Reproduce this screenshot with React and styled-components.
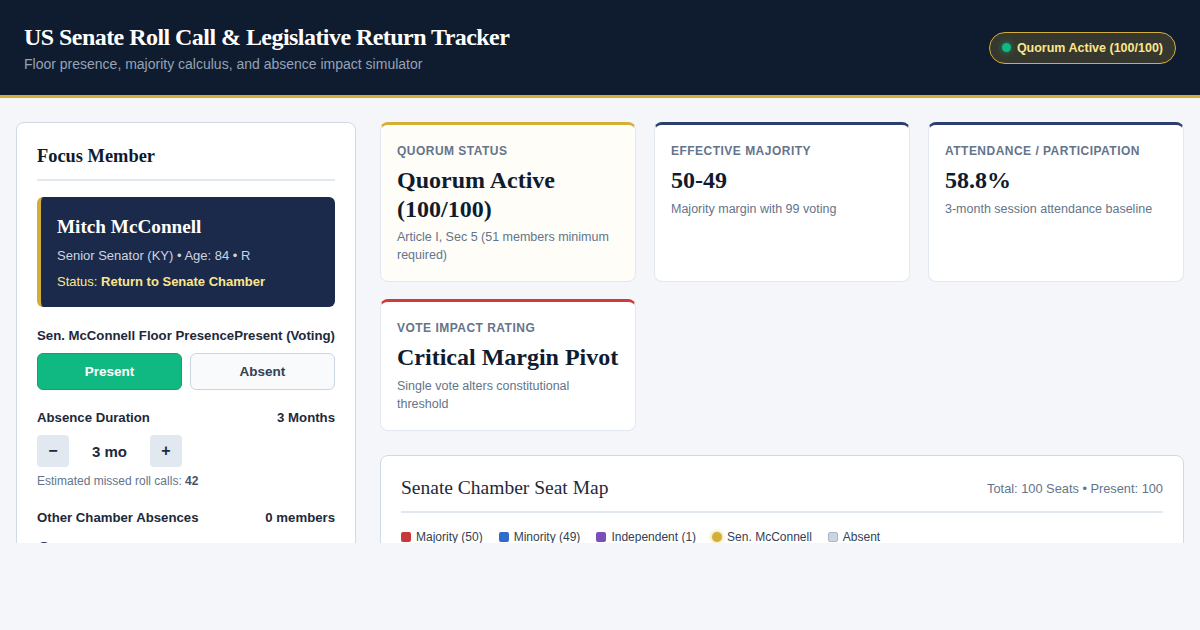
import React, { useState } from "react"
import styled, { createGlobalStyle } from "styled-components"

const GlobalStyle = createGlobalStyle`
  * { box-sizing: border-box; }
  body {
    margin: 0;
    background: #f4f6f9;
    font-family: "Liberation Sans", Arial, sans-serif;
    color: #1e293b;
  }
`

const Header = styled.header`
  display: flex;
  justify-content: space-between;
  align-items: center;
  padding: 23px 24px 22px;
  background: #0f1b2e;
  border-bottom: 3px solid #d4af37;
`

const Title = styled.h1`
  margin: 0;
  font-family: "Liberation Serif", "Times New Roman", serif;
  font-size: 24px;
  line-height: 1.2;
  font-weight: 700;
  letter-spacing: -0.55px;
  color: #ffffff;
`

const Subtitle = styled.p`
  margin: 4px 0 0;
  font-size: 14px;
  line-height: 17px;
  color: #94a3b8;
`

const Badge = styled.div`
  display: flex;
  align-items: center;
  gap: 6px;
  height: 32px;
  padding: 0 12px;
  border: 1px solid #d4af37;
  border-radius: 999px;
  background: rgba(212, 175, 55, 0.2);
  color: #fde68a;
  font-size: 12.5px;
  font-weight: 700;
`

const Dot = styled.span`
  width: 9px;
  height: 9px;
  border-radius: 50%;
  background: #10b981;
  box-shadow: 0 0 6px rgba(16, 185, 129, 0.7);
`

const Main = styled.main`
  display: grid;
  grid-template-columns: 340px 1fr;
  gap: 24px;
  align-items: start;
  height: 445px;
  padding: 24px 16px 0;
  overflow: hidden;
`

const Panel = styled.section`
  background: #ffffff;
  border: 1px solid #cfdae6;
  border-radius: 8px;
  padding: 22px 20px 20px;
`

const PanelTitle = styled.h2`
  margin: 0 0 16px;
  padding-bottom: 12px;
  border-bottom: 2px solid #e2e8f0;
  font-family: "Liberation Serif", "Times New Roman", serif;
  font-size: 18.4px;
  line-height: 22px;
  font-weight: 700;
  color: #0f1b2e;
`

const MemberCard = styled.div`
  background: #1b2a4a;
  border-left: 4px solid #d4af37;
  border-radius: 6px;
  padding: 18px 16px 16px;
`

const MemberName = styled.h3`
  margin: 0 0 8px;
  font-family: "Liberation Serif", "Times New Roman", serif;
  font-size: 19.2px;
  line-height: 23px;
  font-weight: 700;
  color: #ffffff;
`

const MemberLine = styled.p`
  margin: ${(p) => (p.$gap ? "6.5px" : "0")} 0 0;
  font-size: 13px;
  line-height: 19.5px;
  color: ${(p) => (p.$gold ? "#fde68a" : "#cbd5e1")};
  & strong { font-weight: 700; }
`

const Field = styled.div`
  margin-top: ${(p) => p.$top || 20}px;
`

const FieldHead = styled.div`
  display: flex;
  justify-content: space-between;
  margin-bottom: 9px;
  font-size: 13.2px;
  line-height: 16px;
  font-weight: 700;
  color: #1e293b;
`

const Toggle = styled.div`
  display: grid;
  grid-template-columns: 1fr 1fr;
  gap: 8px;
`

const ToggleButton = styled.button`
  height: 37px;
  border-radius: 6px;
  border: 1px solid ${(p) => (p.$active ? "#0ea371" : "#cbd5e1")};
  background: ${(p) => (p.$active ? "#10b981" : "#f8fafc")};
  color: ${(p) => (p.$active ? "#ffffff" : "#334155")};
  font-family: inherit;
  font-size: 13.5px;
  font-weight: 700;
  cursor: pointer;
`

const Stepper = styled.div`
  display: flex;
  align-items: center;
`

const StepButton = styled.button`
  width: 32px;
  height: 32px;
  border: none;
  border-radius: 4px;
  background: #e2e8f0;
  color: #1e293b;
  font-family: inherit;
  font-size: 16px;
  font-weight: 700;
  cursor: pointer;
`

const StepValue = styled.span`
  width: 81px;
  text-align: center;
  font-size: 15px;
  font-weight: 700;
  color: #1e293b;
`

const Hint = styled.p`
  margin: 6.5px 0 0;
  font-size: 12px;
  line-height: 15px;
  color: #64748b;
  & strong { color: #475569; }
`

const Slider = styled.div`
  position: relative;
  height: 18px;
  margin-top: 15px;
  &::before {
    content: "";
    position: absolute;
    left: 0;
    right: 0;
    top: 7px;
    height: 4px;
    border-radius: 2px;
    background: #e2e8f0;
  }
`

const Thumb = styled.span`
  position: absolute;
  left: 0;
  top: 1px;
  width: 14px;
  height: 14px;
  border-radius: 50%;
  background: #1b2a4a;
`

const Right = styled.div`
  display: flex;
  flex-direction: column;
  gap: 24px;
`

const StatGrid = styled.div`
  display: grid;
  grid-template-columns: repeat(3, 1fr);
  gap: 17px 18px;
`

const StatCard = styled.div`
  background: ${(p) => (p.$tint ? "#fffdf8" : "#ffffff")};
  border: 1px solid #e2e8f0;
  border-top: 3px solid ${(p) => p.$accent};
  border-radius: 8px;
  padding: 19px 16px 17px;
`

const StatLabel = styled.div`
  font-size: 12px;
  line-height: 14px;
  font-weight: 700;
  letter-spacing: 0.04em;
  text-transform: uppercase;
  color: #64748b;
`

const StatValue = styled.div`
  margin-top: 8px;
  font-family: "Liberation Serif", "Times New Roman", serif;
  font-size: 24px;
  line-height: 28.8px;
  font-weight: 700;
  color: #0f1b2e;
`

const StatNote = styled.p`
  margin: 5px 0 0;
  font-size: 12.5px;
  line-height: 18px;
  color: #64748b;
`

const MapCard = styled.section`
  background: #ffffff;
  border: 1px solid #cfdae6;
  border-radius: 8px;
  padding: 20px 20px 24px;
`

const MapHead = styled.div`
  display: flex;
  justify-content: space-between;
  align-items: center;
  padding-bottom: 11px;
  border-bottom: 2px solid #e2e8f0;
`

const MapTitle = styled.h2`
  margin: 0;
  font-family: "Liberation Serif", "Times New Roman", serif;
  font-size: 19.5px;
  line-height: 24px;
  font-weight: 400;
  color: #1e293b;
`

const MapMeta = styled.span`
  font-size: 12.8px;
  color: #64748b;
`

const Legend = styled.div`
  display: flex;
  gap: 16px;
  margin-top: 17px;
`

const LegendItem = styled.span`
  display: flex;
  align-items: center;
  gap: 5px;
  font-size: 12px;
  line-height: 14px;
  color: #334155;
`

const Swatch = styled.span`
  width: 10px;
  height: 10px;
  border-radius: ${(p) => (p.$round ? "50%" : "2px")};
  background: ${(p) => p.$color};
  border: ${(p) => (p.$outline ? "1px solid #a9b7c9" : "none")};
  box-shadow: ${(p) => (p.$round ? "0 0 4px rgba(212, 175, 55, 0.8)" : "none")};
`

const stats = [
  {
    label: "Quorum Status",
    value: "Quorum Active (100/100)",
    note: "Article I, Sec 5 (51 members minimum required)",
    accent: "#d4af37",
    tint: true,
  },
  {
    label: "Effective Majority",
    value: "50-49",
    note: "Majority margin with 99 voting",
    accent: "#2c3f6c",
  },
  {
    label: "Attendance / Participation",
    value: "58.8%",
    note: "3-month session attendance baseline",
    accent: "#2c3f6c",
  },
  {
    label: "Vote Impact Rating",
    value: "Critical Margin Pivot",
    note: "Single vote alters constitutional threshold",
    accent: "#d03a3a",
  },
]

const legend = [
  { label: "Majority (50)", color: "#c93838" },
  { label: "Minority (49)", color: "#2f6bcc" },
  { label: "Independent (1)", color: "#7b4fb8" },
  { label: "Sen. McConnell", color: "#d4af37", round: true },
  { label: "Absent", color: "#cbd5e1", outline: true },
]

const App = () => {
  const [present, setPresent] = useState(true)
  const [months, setMonths] = useState(3)

  return (
    <>
      <GlobalStyle />
      <Header>
        <div>
          <Title>US Senate Roll Call &amp; Legislative Return Tracker</Title>
          <Subtitle>Floor presence, majority calculus, and absence impact simulator</Subtitle>
        </div>
        <Badge>
          <Dot />
          Quorum Active (100/100)
        </Badge>
      </Header>
      <Main>
        <Panel>
          <PanelTitle>Focus Member</PanelTitle>
          <MemberCard>
            <MemberName>Mitch McConnell</MemberName>
            <MemberLine>Senior Senator (KY) • Age: 84 • R</MemberLine>
            <MemberLine $gold $gap>
              Status: <strong>Return to Senate Chamber</strong>
            </MemberLine>
          </MemberCard>

          <Field $top={21}>
            <FieldHead>
              <span>Sen. McConnell Floor Presence</span>
              <span>{present ? "Present (Voting)" : "Absent"}</span>
            </FieldHead>
            <Toggle>
              <ToggleButton $active={present} onClick={() => setPresent(true)}>
                Present
              </ToggleButton>
              <ToggleButton $active={!present} onClick={() => setPresent(false)}>
                Absent
              </ToggleButton>
            </Toggle>
          </Field>

          <Field>
            <FieldHead>
              <span>Absence Duration</span>
              <span>{months} Months</span>
            </FieldHead>
            <Stepper>
              <StepButton onClick={() => setMonths(Math.max(0, months - 1))}>−</StepButton>
              <StepValue>{months} mo</StepValue>
              <StepButton onClick={() => setMonths(months + 1)}>+</StepButton>
            </Stepper>
            <Hint>
              Estimated missed roll calls: <strong>{months * 14}</strong>
            </Hint>
          </Field>

          <Field $top={21.5}>
            <FieldHead>
              <span>Other Chamber Absences</span>
              <span>0 members</span>
            </FieldHead>
            <Slider>
              <Thumb />
            </Slider>
          </Field>
        </Panel>

        <Right>
          <StatGrid>
            {stats.map((s) => (
              <StatCard key={s.label} $accent={s.accent} $tint={s.tint}>
                <StatLabel>{s.label}</StatLabel>
                <StatValue>{s.value}</StatValue>
                <StatNote>{s.note}</StatNote>
              </StatCard>
            ))}
          </StatGrid>

          <MapCard>
            <MapHead>
              <MapTitle>Senate Chamber Seat Map</MapTitle>
              <MapMeta>Total: 100 Seats • Present: 100</MapMeta>
            </MapHead>
            <Legend>
              {legend.map((l) => (
                <LegendItem key={l.label}>
                  <Swatch $color={l.color} $round={l.round} $outline={l.outline} />
                  {l.label}
                </LegendItem>
              ))}
            </Legend>
          </MapCard>
        </Right>
      </Main>
    </>
  )
}

export default App
